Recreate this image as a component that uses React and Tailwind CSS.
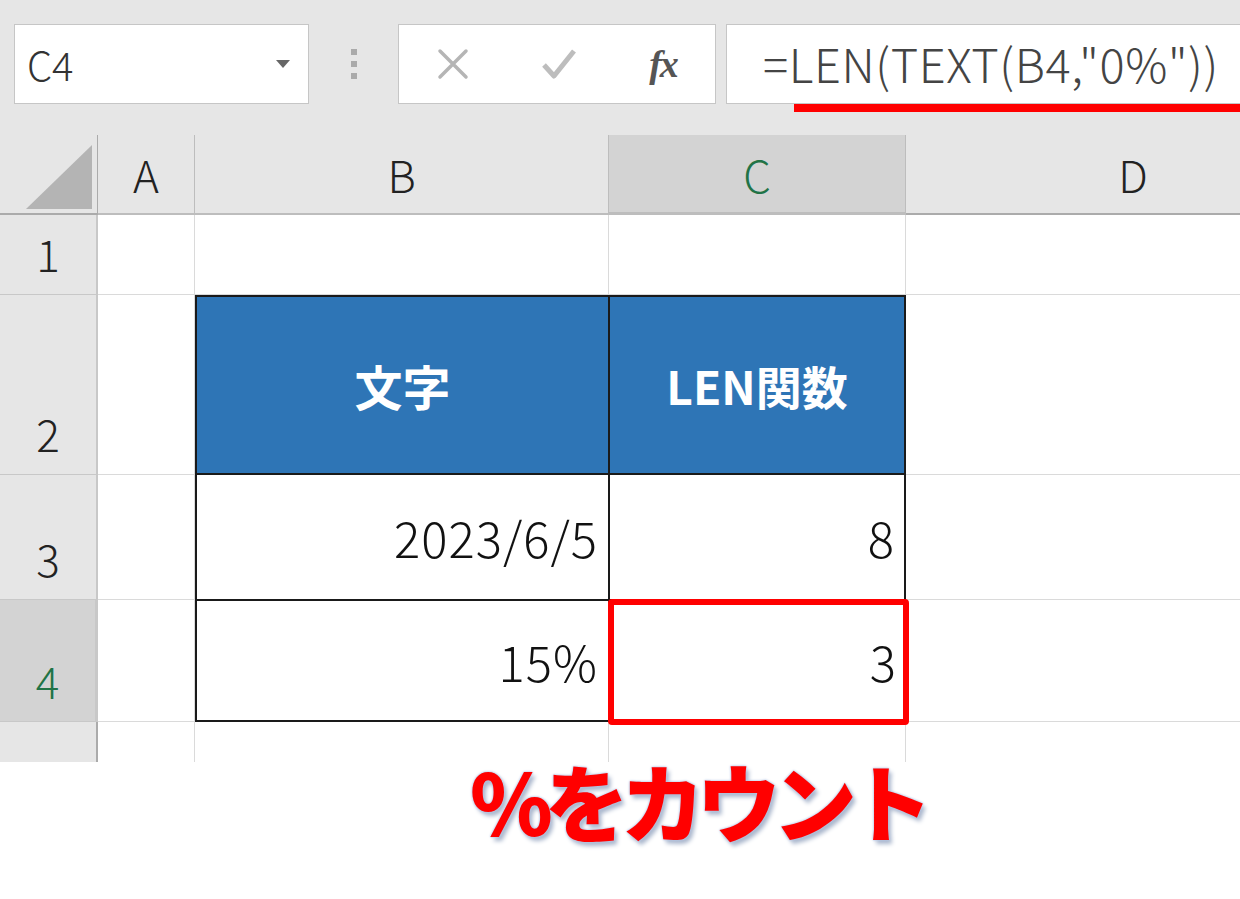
import React from "react";

const font = { fontFamily: '"Noto Sans CJK JP", "Noto Sans", sans-serif' };

const ColHead = ({ label, active, last }) => (
  <div
    className={`flex items-center justify-center text-[44px] leading-none ${
      active
        ? "bg-[#d3d3d3] text-[#217346] border-b-[3px] border-[#217346]"
        : "bg-[#e6e6e6] text-[#222] border-b-[2px] border-[#ababab]"
    } ${last ? "" : "border-r border-[#bdbdbd]"}`}
  >
    {label}
  </div>
);

const RowHead = ({ label, active }) => (
  <div
    className={`flex items-end justify-center pb-[19px] text-[44px] leading-none ${
      active
        ? "bg-[#d3d3d3] text-[#217346] border-r-[3px] border-[#217346]"
        : "bg-[#e6e6e6] text-[#222] border-r-[2px] border-[#ababab]"
    } border-b border-[#c8c8c8]`}
  >
    {label}
  </div>
);

const Cell = ({ className = "", children }) => (
  <div className={`border-r border-b border-[#dadada] bg-white ${className}`}>
    {children}
  </div>
);

export default function App() {
  return (
    <div className="w-[1240px] h-[899px] overflow-hidden bg-white" style={font}>
      {/* formula bar */}
      <div className="h-[135px] bg-[#e6e6e6] flex items-start pt-[24px] pl-[14px]">
        <div className="w-[295px] h-[80px] bg-white border border-[#c6c6c6] flex items-center justify-between pl-[12px] pr-[18px]">
          <span className="text-[40px] leading-none text-[#333] font-light">C4</span>
          <svg width="14" height="9" viewBox="0 0 14 9">
            <path d="M0 0h14L7 8z" fill="#666" />
          </svg>
        </div>
        <div className="w-[89px] h-[80px] flex flex-col items-center justify-center gap-[6px]">
          <span className="w-[6px] h-[6px] bg-[#aaa]" />
          <span className="w-[6px] h-[6px] bg-[#aaa]" />
          <span className="w-[6px] h-[6px] bg-[#aaa]" />
        </div>
        <div className="w-[318px] h-[80px] bg-white border border-[#c6c6c6] flex items-center">
          <div className="w-[108px] flex justify-center">
            <svg width="34" height="34" viewBox="0 0 34 34">
              <path d="M4 4L30 30M30 4L4 30" stroke="#b5b5b5" strokeWidth="3.5" strokeLinecap="round" />
            </svg>
          </div>
          <div className="w-[104px] flex justify-center">
            <svg width="38" height="34" viewBox="0 0 38 34">
              <path d="M4 18L14 29L34 4" stroke="#bdbdbd" strokeWidth="5" fill="none" strokeLinejoin="round" />
            </svg>
          </div>
          <div className="flex-1 flex justify-center">
            <span
              className="text-[38px] italic font-bold text-[#555] tracking-[-2px]"
              style={{ fontFamily: '"Liberation Serif", serif' }}
            >
              fx
            </span>
          </div>
        </div>
        <div className="ml-[10px] flex-1 h-[80px] bg-white border border-[#c6c6c6] border-r-0 relative">
          <div className="absolute left-[36px] top-[14px] text-[47px] leading-none text-[#444] font-light whitespace-nowrap tracking-[0.6px]">
            =LEN(TEXT(B4,"0%"))
          </div>
          <div className="absolute left-[67px] right-0 top-[79px] h-[8px] bg-[#ff0000]" />
        </div>
      </div>

      {/* grid */}
      <div className="grid grid-cols-[98px_97px_414px_297px_454px] grid-rows-[80px_80px_180px_125px_122px_40px] font-light">
        {/* header row */}
        <div className="bg-[#e6e6e6] border-r border-b-[2px] border-[#ababab] relative">
          <svg className="absolute left-[26px] top-[10px]" width="66" height="64" viewBox="0 0 66 64">
            <path d="M66 0V64H0z" fill="#b4b4b4" />
          </svg>
        </div>
        <ColHead label="A" />
        <ColHead label="B" />
        <ColHead label="C" active />
        <ColHead label="D" last />

        {/* row 1 */}
        <RowHead label="1" />
        <Cell />
        <Cell />
        <Cell />
        <Cell />

        {/* row 2 */}
        <RowHead label="2" />
        <Cell />
        <div className="bg-[#2e75b6] border-2 border-r border-[#1a1a1a] flex items-center justify-center text-white text-[48px] font-bold">
          文字
        </div>
        <div className="bg-[#2e75b6] border-2 border-l border-[#1a1a1a] flex items-center justify-center text-white text-[46px] font-bold">
          LEN関数
        </div>
        <Cell />

        {/* row 3 */}
        <RowHead label="3" />
        <Cell />
        <div className="bg-white border-l-2 border-r border-b border-[#1a1a1a] flex items-center justify-end pr-[10px] text-[49px] tracking-[1px] text-[#111]">
          2023/6/5
        </div>
        <div className="bg-white border-r-2 border-l border-b border-[#1a1a1a] flex items-center justify-end pr-[10px] text-[49px] text-[#111]">
          8
        </div>
        <Cell />

        {/* row 4 */}
        <RowHead label="4" active />
        <Cell />
        <div className="bg-white border-l-2 border-r border-b-2 border-t border-[#1a1a1a] flex items-center justify-end pr-[10px] text-[49px] tracking-[1px] text-[#111]">
          15%
        </div>
        <div className="bg-white relative flex items-center justify-end pr-[10px] text-[49px] text-[#111]">
          3
          <div className="absolute -left-[1px] -right-[3px] -top-[1px] -bottom-[3px] border-[6px] border-[#ff0000] rounded-[4px]" />
        </div>
        <Cell />

        {/* row 5 (partial) */}
        <div className="bg-[#e6e6e6] border-r-[2px] border-[#ababab]" />
        <Cell className="border-b-0" />
        <Cell className="border-b-0" />
        <Cell className="border-b-0" />
        <div className="bg-white" />
      </div>

      {/* annotation */}
      <div className="pl-[470px] -mt-[4px]">
        <span
          className="text-[84px] leading-none font-black text-[#ff0000] tracking-[-8px]"
          style={{
            textShadow:
              "0 0 2px #b8c8e6, 0 0 3px #b8c8e6, 3px 4px 4px #a9b6cc",
          }}
        >
          %をカウント
        </span>
      </div>
    </div>
  );
}
